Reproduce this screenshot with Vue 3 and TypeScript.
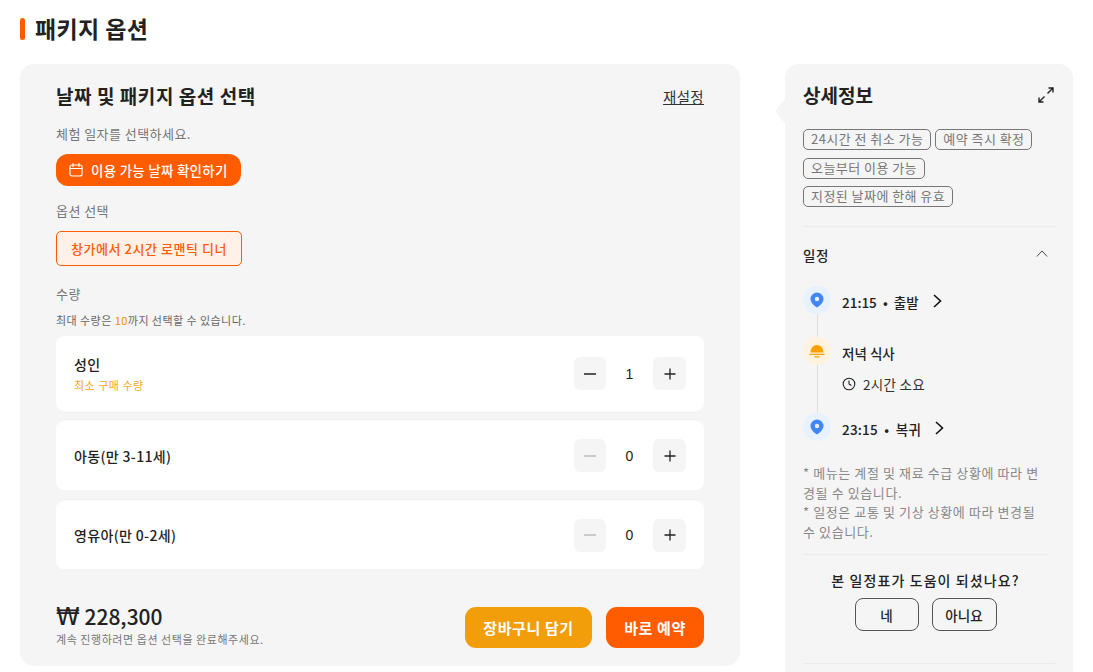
<script setup lang="ts">
import { ref } from 'vue';

interface Row {
  name: string;
  note?: string;
  count: number;
  cls: string;
}

const rows = ref<Row[]>([
  { name: '성인', note: '최소 구매 수량', count: 1, cls: 'tall' },
  { name: '아동(만 3-11세)', count: 0, cls: 'mid' },
  { name: '영유아(만 0-2세)', count: 0, cls: 'low' }
]);

const tags = ['24시간 전 취소 가능', '예약 즉시 확정', '오늘부터 이용 가능', '지정된 날짜에 한해 유효'];
</script>

<template>
  <div class="page">
    <h1 class="page-title"><span class="bar"></span><span class="title-text">패키지 옵션</span></h1>
    <div class="columns">
      <section class="card main">
        <div class="main-head">
          <h2>날짜 및 패키지 옵션 선택</h2>
          <a class="reset">재설정</a>
        </div>
        <p class="label first">체험 일자를 선택하세요.</p>
        <button class="date-btn">
          <svg viewBox="0 0 16 16" width="16" height="16" fill="none" stroke="#fff" stroke-width="1.2">
            <rect x="2" y="3" width="12" height="11" rx="2" />
            <path d="M2 6.500h12M5 1.500v3M11 1.500v3" stroke-linecap="round" />
          </svg>
          이용 가능 날짜 확인하기
        </button>
        <p class="label opt">옵션 선택</p>
        <button class="option">창가에서 2시간 로맨틱 디너</button>
        <p class="label qty">수량</p>
        <p class="hint">최대 수량은 <em>10</em>까지 선택할 수 있습니다.</p>
        <div class="rows">
          <div v-for="r in rows" :key="r.name" class="row" :class="r.cls">
            <div>
              <div class="row-name">{{ r.name }}</div>
              <div v-if="r.note" class="row-note">{{ r.note }}</div>
            </div>
            <div class="stepper">
              <button class="step minus" :class="{ off: r.count === 0 }">
                <svg viewBox="0 0 14 14" width="14" height="14"><path d="M1 7h12" stroke="currentColor" stroke-width="1.5" /></svg>
              </button>
              <span class="count">{{ r.count }}</span>
              <button class="step">
                <svg viewBox="0 0 14 14" width="14" height="14"><path d="M1.500 7h11M7 1.500v11" stroke="currentColor" stroke-width="1.3" /></svg>
              </button>
            </div>
          </div>
        </div>
        <div class="foot">
          <div class="price-box">
            <div class="price"><span class="won">₩</span> 228,300</div>
            <div class="price-note">계속 진행하려면 옵션 선택을 완료해주세요.</div>
          </div>
          <div class="foot-btns">
            <button class="cta cart">장바구니 담기</button>
            <button class="cta buy">바로 예약</button>
          </div>
        </div>
      </section>

      <aside class="card side">
        <span class="notch"></span>
        <div class="side-head">
          <h2>상세정보</h2>
          <svg viewBox="0 0 16 16" width="16" height="16" fill="none" stroke="#222" stroke-width="1.4">
            <path d="M9.500 6.500L15 1M10.500 1H15v4.500M6.500 9.500L1 15M1 10.500V15h4.500" />
          </svg>
        </div>
        <div class="tags">
          <span v-for="t in tags" :key="t" class="tag">{{ t }}</span>
        </div>
        <hr class="line tags-line" />
        <div class="sched-head">
          <span>일정</span>
          <svg viewBox="0 0 14 8" width="12" height="7" fill="none" stroke="#444" stroke-width="1.1"><path d="M1 7.500L7 1l6 6.500" /></svg>
        </div>
        <div class="timeline">
          <div class="tl-row">
            <span class="dot blue">
              <svg viewBox="0 0 14 16" width="14" height="16"><path fill="#4285f4" fill-rule="evenodd" d="M7 .5a6.500 6.500 0 0 1 6.500 6.500c0 3.400-3.700 6.800-6.500 8.500C4.200 13.800.5 10.400.5 7A6.500 6.500 0 0 1 7 .5zm0 4.300a2.200 2.200 0 1 0 0 4.400 2.200 2.200 0 0 0 0-4.400z" /></svg>
            </span>
            <span class="tl-text">21:15 &nbsp;•&nbsp; 출발</span>
            <svg class="chev" viewBox="0 0 9 14" width="9" height="14" fill="none" stroke="#111" stroke-width="1.600"><path d="M1 1l6.500 6L1 13" /></svg>
          </div>
          <div class="tl-row meal">
            <span class="dot amber">
              <svg viewBox="0 0 16 14" width="16" height="14"><path fill="#ffa000" d="M1.500 8.500C1.500 4.500 4.200 1 8 1s6.500 3.500 6.500 7.500zM.5 9.800h15v1.100H.5zM5.500 12.300h5v1.100h-5z" /></svg>
            </span>
            <span class="tl-text">저녁 식사</span>
          </div>
          <div class="duration">
            <svg viewBox="0 0 14 14" width="14" height="14" fill="none" stroke="#222" stroke-width="1.100"><circle cx="7" cy="7" r="5.800" /><path d="M7 3.500V7l2.500 1.500" /></svg>
            <span>2시간 소요</span>
          </div>
          <div class="tl-row last">
            <span class="dot blue">
              <svg viewBox="0 0 14 16" width="14" height="16"><path fill="#4285f4" fill-rule="evenodd" d="M7 .5a6.500 6.500 0 0 1 6.500 6.500c0 3.400-3.700 6.800-6.500 8.500C4.200 13.800.5 10.400.5 7A6.500 6.500 0 0 1 7 .5zm0 4.300a2.200 2.200 0 1 0 0 4.400 2.200 2.200 0 0 0 0-4.400z" /></svg>
            </span>
            <span class="tl-text wide">23:15 &nbsp;•&nbsp; 복귀</span>
            <svg class="chev" viewBox="0 0 9 14" width="9" height="14" fill="none" stroke="#111" stroke-width="1.600"><path d="M1 1l6.500 6L1 13" /></svg>
          </div>
        </div>
        <div class="narrow">
          <p class="notes">* 메뉴는 계절 및 재료 수급 상황에 따라 변경될 수 있습니다.<br />* 일정은 교통 및 기상 상황에 따라 변경될 수 있습니다.</p>
          <hr class="line" />
          <div class="feedback">
            <p>본 일정표가 도움이 되셨나요?</p>
            <div class="fb-btns">
              <button class="fb yes">네</button>
              <button class="fb no">아니요</button>
            </div>
          </div>
        </div>
        <hr class="line fb-line" />
      </aside>
    </div>
  </div>
</template>

<style>
html, body { margin: 0; background: #fff; overflow: hidden; }
</style>

<style scoped>
.page {
  height: 672px;
  overflow: hidden;
  box-sizing: border-box;
  padding: 14px 20px 0;
  font-family: "Noto Sans CJK KR", "Noto Sans", sans-serif;
  color: #222;
}
.page-title {
  display: flex;
  align-items: center;
  gap: 10px;
  margin: 0;
  height: 30px;
  font-size: 23px;
  font-weight: 700;
  line-height: 30px;
  letter-spacing: .4px;
}
.title-text { margin-bottom: 3px; }
.bar { width: 5px; height: 22px; border-radius: 3px; background: #ff5c00; }
.columns { display: flex; align-items: flex-start; gap: 45px; margin-top: 20px; }
.card { background: #f5f5f5; border-radius: 14px; box-sizing: border-box; }
.main { width: 720px; height: 602px; padding: 18px 36px 0; flex: none; }
.main-head { display: flex; align-items: center; justify-content: space-between; height: 28px; }
h2 { margin: 0; font-size: 19px; font-weight: 700; line-height: 28px; }
.main-head h2 { letter-spacing: .55px; }
.reset { font-size: 14.500px; text-decoration: underline; color: #333; letter-spacing: .3px; margin-top: 1px; }
.label { margin: 0; font-size: 13px; line-height: 18px; color: #777; letter-spacing: .45px; }
.first { margin-top: 15px; }
.date-btn {
  display: flex; align-items: center; gap: 7px;
  margin-top: 11px; height: 32px; width: 185px; padding: 0 0 0 12px;
  border: 0; border-radius: 12px; background: #ff5c00; color: #fff;
  font: 500 13.500px "Noto Sans CJK KR", sans-serif;
  letter-spacing: .25px;
}
.opt { margin-top: 16px; }
.option {
  display: block; margin-top: 11px; width: 186px; height: 35px; padding: 0;
  border: 1px solid #ff5c00; border-radius: 5px; background: #fff0e8; color: #ff5c00;
  font: 500 13px "Noto Sans CJK KR", sans-serif;
  letter-spacing: .55px;
}
.qty { margin-top: 19px; }
.hint { margin: 9px 0 0; font-size: 11px; line-height: 16px; color: #666; letter-spacing: .45px; }
.hint em { font-style: normal; color: #ff8a00; }
.rows { margin-top: 8px; display: flex; flex-direction: column; gap: 10px; }
.row {
  display: flex; align-items: center; justify-content: space-between;
  background: #fff; border-radius: 8px; padding: 0 18px 0 18px;
}
.tall { height: 75px; }
.mid { height: 69px; }
.low { height: 68px; margin-top: 1px; }
.row-name { font-size: 14px; font-weight: 500; line-height: 20px; color: #222; letter-spacing: .35px; }
.row-note { font-size: 11px; line-height: 16px; color: #f5a623; margin-top: 3px; letter-spacing: .5px; }
.stepper { display: flex; align-items: center; }
.step {
  display: flex; align-items: center; justify-content: center;
  width: 33px; height: 33px; padding: 0; border: 0; border-radius: 6px;
  background: #f5f5f5; color: #222;
}
.step.minus { width: 32px; }
.step.off { color: #bbb; }
.count { width: 47px; text-align: center; font-size: 14px; font-family: "Liberation Sans", sans-serif; color: #222; }
.foot { display: flex; align-items: center; justify-content: space-between; margin-top: 34px; }
.price-box { margin-bottom: 5px; }
.price { font-size: 21px; font-weight: 500; line-height: 26px; }
.won { font-family: "DejaVu Sans", sans-serif; font-size: 24px; line-height: 1; font-weight: 400; }
.price-note { font-size: 11px; line-height: 16px; color: #777; margin-top: 2px; letter-spacing: .55px; }
.foot-btns { display: flex; gap: 14px; }
.cta { height: 41px; border: 0; border-radius: 11px; color: #fff; font: 700 15px "Noto Sans CJK KR", sans-serif; padding: 0; letter-spacing: .6px; }
.cart { width: 127px; background: #f29d0a; }
.buy { width: 98px; background: #ff5c00; }

.side { position: relative; width: 288px; height: 640px; padding: 16px 18px 0; flex: none; }
.notch {
  position: absolute; left: -9px; top: 35px; width: 24px; height: 24px;
  background: #f5f5f5; transform: scaleY(1.3) rotate(45deg) scale(.75); border-radius: 2px;
}
.side-head { position: relative; display: flex; align-items: center; justify-content: space-between; height: 30px; }
.side-head svg { margin-right: 1px; }
.tags { position: relative; display: flex; flex-wrap: wrap; gap: 7.500px 4px; margin-top: 19px; }
.tag {
  box-sizing: border-box; height: 21px; padding: 0 7px; border: 1px solid #777; border-radius: 5px;
  font-size: 13px; line-height: 18px; color: #777; white-space: nowrap; letter-spacing: .45px;
}
.line { border: 0; border-top: 1px solid #ececec; margin: 0; }
.tags-line { margin-top: 19px; }
.sched-head {
  display: flex; align-items: center; justify-content: space-between;
  margin-top: 17px; height: 22px; font-size: 13.500px; font-weight: 500; letter-spacing: .5px;
}
.sched-head svg { margin-right: 7px; margin-bottom: 4px; }
.timeline { position: relative; margin-top: 20px; }
.timeline::before {
  content: ''; position: absolute; left: 14px; top: 24px; height: 125px; width: 1px; background: #ddd;
}
.tl-row { position: relative; display: flex; align-items: center; height: 28px; font-size: 13.500px; font-weight: 500; color: #222; }
.tl-text { padding-top: 3px; }
.wide { letter-spacing: .2px; }
.meal { margin-top: 23px; }
.last { margin-top: 19px; }
.dot {
  display: flex; align-items: center; justify-content: center;
  width: 28px; height: 28px; border-radius: 50%; margin-right: 11px; flex: none;
}
.blue { background: #e8f2ff; }
.amber { background: #fff3df; }
.chev { margin-left: 14px; margin-top: 2px; }
.duration { display: flex; align-items: center; gap: 7px; margin: 9px 0 0 39px; height: 20px; font-size: 13.500px; color: #333; letter-spacing: .3px; }
.narrow { width: 245px; }
.notes { margin: 22px 0 0; font-size: 13px; line-height: 19.500px; color: #888; letter-spacing: .6px; }
.notes + .line { margin-top: 13px; }
.feedback { text-align: center; padding-top: 15px; }
.feedback p { margin: 0; font-size: 14px; line-height: 20px; font-weight: 500; color: #222; letter-spacing: 1.1px; }
.fb-btns { display: flex; justify-content: center; gap: 13px; margin-top: 8px; }
.fb {
  height: 33px; box-sizing: border-box; border: 1px solid #555; border-radius: 8px; background: transparent;
  font: 500 13.500px "Noto Sans CJK KR", sans-serif; color: #222; padding: 0;
}
.yes { width: 64px; }
.no { width: 65px; }
.fb-line { margin-top: 32px; }
</style>
